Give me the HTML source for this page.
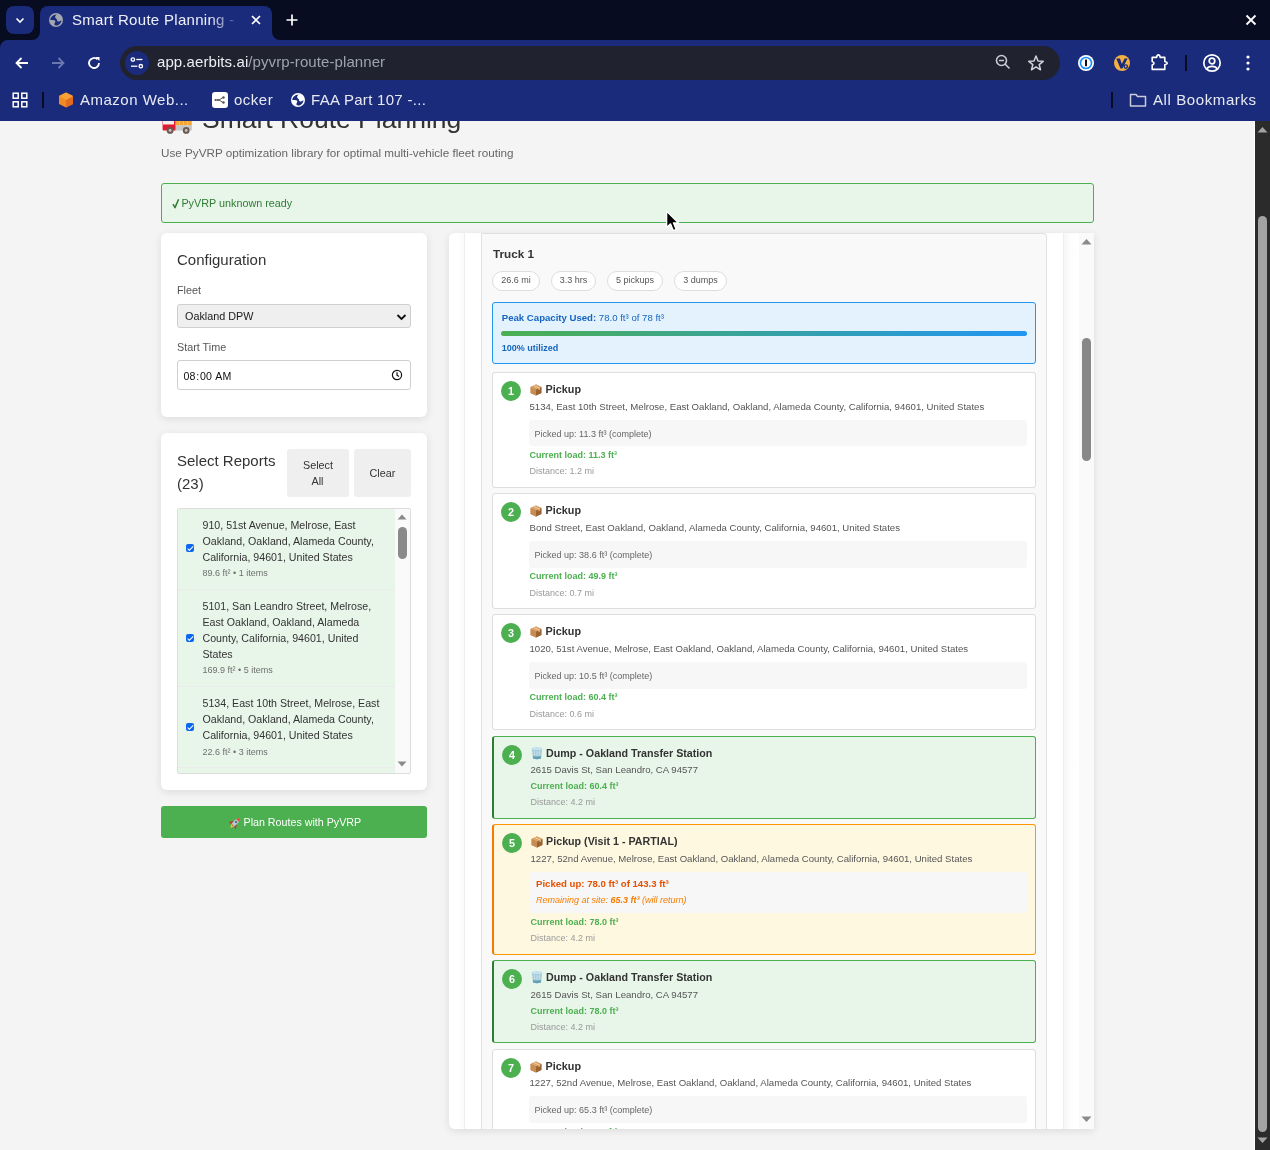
<!DOCTYPE html>
<html><head><meta charset="utf-8">
<style>
*{box-sizing:border-box;margin:0;padding:0}
html,body{width:1270px;height:1150px;overflow:hidden;background:#f4f4f4;font-family:"Liberation Sans",sans-serif}
#root{position:absolute;left:0;top:0;width:1270px;height:1150px;overflow:hidden;will-change:transform}
.abs{position:absolute}
#tabstrip{position:absolute;left:0;top:0;width:1270px;height:40px;background:#080c20}
#toolbar{position:absolute;left:0;top:40px;width:1270px;height:81px;background:#1b2b7c}
.ui{font-family:"Liberation Sans",sans-serif;color:#e8eaf2}
.card{background:#fff;border-radius:6px;box-shadow:0 2px 8px rgba(0,0,0,0.1)}
.btn{background:#efefef;border-radius:3px}
.chk{width:8.2px;height:8.2px;border-radius:2px;background:#0b66f0}
.chk::after{content:"";position:absolute;left:2.6px;top:0.7px;width:2.4px;height:4.6px;border:solid #fff;border-width:0 1.4px 1.4px 0;transform:rotate(45deg)}
</style></head><body><div id="root">
<!-- CHROME -->
<div id="tabstrip"></div>
<div id="toolbar"></div>
<svg class="abs" style="left:0;top:40px" width="8" height="8"><path d="M0 0 H8 A8 8 0 0 0 0 8 Z" fill="#080c20"/></svg>
<!-- tab dropdown -->
<div class="abs" style="left:6px;top:6px;width:28px;height:28px;border-radius:8px;background:#1b2b7c"></div>
<svg class="abs" style="left:14px;top:14px" width="12" height="12" viewBox="0 0 12 12"><path d="M2.5 4.5 L6 8 L9.5 4.5" fill="none" stroke="#fff" stroke-width="1.6"/></svg>
<!-- active tab -->
<div class="abs" style="left:40px;top:6px;width:232px;height:40px;border-radius:8px 8px 0 0;background:#1b2b7c"></div>
<svg class="abs" style="left:32px;top:32px" width="8" height="8"><path d="M0 8 A8 8 0 0 0 8 0 L8 8 Z" fill="#1b2b7c"/></svg>
<svg class="abs" style="left:272px;top:32px" width="8" height="8"><path d="M0 0 A8 8 0 0 0 8 8 L0 8 Z" fill="#1b2b7c"/></svg>
<svg class="abs" style="left:49px;top:13px" width="14" height="14" viewBox="0 0 14 14"><circle cx="7" cy="7" r="7" fill="#a4a7b0"/><path d="M1.3 6.9 C1.6 4 4 1.6 7.7 1.5 C6 2.6 5.6 4.4 6.9 5.5 C7.9 6.3 8.5 7.1 8.1 8 C9 8.8 10.4 8.4 12.5 7.2 C12.3 10.2 9.8 12.5 7 12.6 C5.6 12.5 5.1 11.3 5.5 10.5 C6.2 9.4 6.8 8.3 5.9 7.6 C4.9 6.9 3 7.3 1.3 6.9 Z" fill="#1b2b7c"/></svg>
<div class="abs ui" style="left:72px;top:11px;font-size:15px;letter-spacing:0.3px;white-space:nowrap;width:168px;overflow:hidden;color:#eef0f8;-webkit-mask-image:linear-gradient(90deg,#000 82%,transparent)">Smart Route Planning - </div>
<svg class="abs" style="left:250px;top:14px" width="12" height="12" viewBox="0 0 12 12"><path d="M2 2 L10 10 M10 2 L2 10" stroke="#fff" stroke-width="1.6"/></svg>
<svg class="abs" style="left:285px;top:13px" width="14" height="14" viewBox="0 0 14 14"><path d="M7 1.5 V12.5 M1.5 7 H12.5" stroke="#fff" stroke-width="1.7"/></svg>
<svg class="abs" style="left:1244px;top:13px" width="14" height="14" viewBox="0 0 14 14"><path d="M2.5 2.5 L11.5 11.5 M11.5 2.5 L2.5 11.5" stroke="#fff" stroke-width="1.8"/></svg>
<!-- nav buttons -->
<svg class="abs" style="left:13px;top:54px" width="18" height="18" viewBox="0 0 18 18"><path d="M15 9 H3.5 M8.5 4 L3.5 9 L8.5 14" fill="none" stroke="#fff" stroke-width="1.8"/></svg>
<svg class="abs" style="left:49px;top:54px" width="18" height="18" viewBox="0 0 18 18"><path d="M3 9 H14.5 M9.5 4 L14.5 9 L9.5 14" fill="none" stroke="#6c77b0" stroke-width="1.8"/></svg>
<svg class="abs" style="left:85px;top:54px" width="18" height="18" viewBox="0 0 18 18"><path d="M14 9 A5 5 0 1 1 12.5 5.4" fill="none" stroke="#fff" stroke-width="1.8"/><path d="M10.5 3 H14.5 V7 Z" fill="#fff"/></svg>
<!-- url bar -->
<div class="abs" style="left:120px;top:46px;width:940px;height:34px;border-radius:17px;background:#20232f"></div>
<div class="abs" style="left:125px;top:51px;width:24px;height:24px;border-radius:12px;background:#1b2b7c"></div>
<svg class="abs" style="left:129px;top:55px" width="16" height="16" viewBox="0 0 16 16"><circle cx="3.9" cy="4.5" r="1.7" fill="none" stroke="#fff" stroke-width="1.3"/><path d="M7.3 4.5 H13.4" stroke="#fff" stroke-width="1.3"/><circle cx="11.8" cy="11.2" r="1.7" fill="none" stroke="#fff" stroke-width="1.3"/><path d="M2 11.2 H8.4" stroke="#fff" stroke-width="1.3"/></svg>
<div class="abs ui" style="left:157px;top:53px;font-size:15px;white-space:nowrap;color:#eceef4;letter-spacing:0.09px">app.aerbits.ai<span style="color:#9ea3b2">/pyvrp-route-planner</span></div>
<svg class="abs" style="left:994px;top:53px" width="18" height="18" viewBox="0 0 18 18"><circle cx="7.5" cy="7.5" r="5" fill="none" stroke="#c8cad4" stroke-width="1.6"/><path d="M5 7.5 H10 M11 11 L15.5 15.5" stroke="#c8cad4" stroke-width="1.6"/></svg>
<svg class="abs" style="left:1027px;top:54px" width="18" height="18" viewBox="0 0 18 18"><path d="M9 2 L11 7 L16.2 7.3 L12.2 10.6 L13.5 15.8 L9 12.9 L4.5 15.8 L5.8 10.6 L1.8 7.3 L7 7 Z" fill="none" stroke="#d0d2dc" stroke-width="1.5" stroke-linejoin="round"/></svg>
<!-- extension icons -->
<svg class="abs" style="left:1077px;top:54px" width="18" height="18" viewBox="0 0 18 18"><circle cx="9" cy="9" r="8" fill="#fff"/><circle cx="9" cy="9" r="6.3" fill="#1a8cff"/><circle cx="9" cy="9" r="4.7" fill="#fff"/><rect x="8" y="5.6" width="2" height="6.6" fill="#111"/></svg>
<svg class="abs" style="left:1113px;top:54px" width="18" height="18" viewBox="0 0 18 18"><circle cx="9" cy="9" r="8" fill="#f5b041"/><path d="M3.3 4.6 H7 L8.8 10 L11.6 4.6 H14.6 L9.4 14.4 H7.4 Z" fill="#1b2b7c"/><circle cx="12.8" cy="12.6" r="2.3" fill="#1b2b7c"/><circle cx="12.8" cy="12.6" r="1" fill="#f5b041"/></svg>
<svg class="abs" style="left:1149px;top:53px" width="20" height="20" viewBox="0 0 20 20"><path d="M3.2 4.4 H7.6 Q8 1.9 9.4 1.9 Q10.8 1.9 11.2 4.4 H15.8 V8.6 Q18.3 9.4 18.3 10.2 Q18.3 11 15.8 11.8 V16.4 H3.2 V12 Q5 11.4 5 10.2 Q5 9 3.2 8.4 Z" fill="none" stroke="#fff" stroke-width="1.6" stroke-linejoin="round"/></svg>
<div class="abs" style="left:1185px;top:55px;width:2px;height:16px;background:#080c20"></div>
<svg class="abs" style="left:1202px;top:53px" width="20" height="20" viewBox="0 0 20 20"><circle cx="10" cy="10" r="8.2" fill="none" stroke="#fff" stroke-width="1.7"/><circle cx="10" cy="8" r="2.8" fill="none" stroke="#fff" stroke-width="1.7"/><path d="M4.8 15.8 C6.5 12.5 13.5 12.5 15.2 15.8" fill="none" stroke="#fff" stroke-width="1.7"/></svg>
<svg class="abs" style="left:1240px;top:53px" width="16" height="20" viewBox="0 0 16 20"><circle cx="8" cy="4" r="1.6" fill="#fff"/><circle cx="8" cy="10" r="1.6" fill="#fff"/><circle cx="8" cy="16" r="1.6" fill="#fff"/></svg>
<!-- bookmarks -->
<svg class="abs" style="left:12px;top:92px" width="16" height="16" viewBox="0 0 16 16"><rect x="1.2" y="1.2" width="5" height="5" fill="none" stroke="#fff" stroke-width="1.5"/><rect x="9.8" y="1.2" width="5" height="5" fill="none" stroke="#fff" stroke-width="1.5"/><rect x="1.2" y="9.8" width="5" height="5" fill="none" stroke="#fff" stroke-width="1.5"/><rect x="9.8" y="9.8" width="5" height="5" fill="none" stroke="#fff" stroke-width="1.5"/></svg>
<div class="abs" style="left:42px;top:92px;width:2px;height:16px;background:#080c20"></div>
<svg class="abs" style="left:58px;top:92px" width="16" height="16" viewBox="0 0 16 16"><path d="M8 0.5 L15 4 V12 L8 15.5 L1 12 V4 Z" fill="#f08a24"/><path d="M8 8 L15 4 V12 L8 15.5 Z" fill="#e36b1e"/><path d="M1 4 L8 0.5 L15 4 L8 8 Z" fill="#f7a036"/></svg>
<div class="abs ui" style="left:80px;top:91px;font-size:15px;white-space:nowrap;letter-spacing:0.5px">Amazon Web...</div>
<div class="abs" style="left:212px;top:92px;width:16px;height:16px;border-radius:3px;background:#fff"></div>
<svg class="abs" style="left:214px;top:96px" width="12" height="8" viewBox="0 0 12 8"><path d="M1 4 H5 L9 1.5 M5 4 L9 6.5" stroke="#555" stroke-width="1" fill="none"/><circle cx="1.5" cy="4" r="1" fill="#555"/><circle cx="4" cy="4" r="1" fill="#555"/><circle cx="9.5" cy="1.5" r="1.2" fill="#555"/><circle cx="9.5" cy="6.5" r="1.2" fill="#555"/></svg>
<div class="abs ui" style="left:234px;top:91px;font-size:15px;white-space:nowrap;letter-spacing:0.5px">ocker</div>
<svg class="abs" style="left:291px;top:93px" width="14" height="14" viewBox="0 0 14 14"><circle cx="7" cy="7" r="7" fill="#ffffff"/><path d="M1.3 6.9 C1.6 4 4 1.6 7.7 1.5 C6 2.6 5.6 4.4 6.9 5.5 C7.9 6.3 8.5 7.1 8.1 8 C9 8.8 10.4 8.4 12.5 7.2 C12.3 10.2 9.8 12.5 7 12.6 C5.6 12.5 5.1 11.3 5.5 10.5 C6.2 9.4 6.8 8.3 5.9 7.6 C4.9 6.9 3 7.3 1.3 6.9 Z" fill="#1b2b7c"/></svg>
<div class="abs ui" style="left:311px;top:91px;font-size:15px;white-space:nowrap;letter-spacing:0.3px">FAA Part 107 -...</div>
<div class="abs" style="left:1111px;top:92px;width:2px;height:16px;background:#080c20"></div>
<svg class="abs" style="left:1129px;top:92px" width="18" height="16" viewBox="0 0 18 16"><path d="M1.5 2.5 H7 L8.5 4.5 H16.5 V14 H1.5 Z" fill="none" stroke="#c9ccd8" stroke-width="1.5" stroke-linejoin="round"/></svg>
<div class="abs ui" style="left:1153px;top:91px;font-size:15px;white-space:nowrap;letter-spacing:0.6px">All Bookmarks</div>

<div class="abs" style="left:0;top:121px;width:1255px;height:1029px;overflow:hidden;background:#f4f4f4">
<div class="abs" style="left:0;top:-121px;width:1270px;height:1150px">
<svg class="abs" style="left:160px;top:105px" width="34" height="30" viewBox="0 0 34 30"><rect x="15.6" y="0" width="16.2" height="20.5" fill="#f3a634"/><path d="M19.5 8 V20 M23.5 8 V20 M27.5 8 V20" stroke="#f7c060" stroke-width="1"/><rect x="15.3" y="20.3" width="16.5" height="5.2" fill="#c6c6c6"/><path d="M2.6 16 H15.5 V25.4 H3.6 Q2.6 25.4 2.6 24.4 Z" fill="#e01b30"/><path d="M3 12 H14 V19.5 H3 Z" fill="#f3eee8"/><circle cx="10.1" cy="25.4" r="3.4" fill="#6b5a52"/><circle cx="10.1" cy="25.4" r="1.4" fill="#cdc8c4"/><circle cx="26.2" cy="25.4" r="3.4" fill="#6b5a52"/><circle cx="26.2" cy="25.4" r="1.4" fill="#cdc8c4"/></svg>
<div class="abs" style="left:202px;top:102.50px;font-size:26.5px;line-height:33px;color:#333;white-space:nowrap;">Smart Route Planning</div>
<div class="abs" style="left:161px;top:145.00px;font-size:11.7px;line-height:15px;color:#666;white-space:nowrap;">Use PyVRP optimization library for optimal multi-vehicle fleet routing</div>
<div class="abs" style="left:161px;top:183px;width:933px;height:40px;background:#e8f5e9;border:1px solid #4caf50;border-radius:3px"></div>
<svg class="abs" style="left:172px;top:198px" width="8" height="11" viewBox="0 0 8 11"><path d="M1 6.2 L3 9.6 L6.6 1.2" fill="none" stroke="#2e7d32" stroke-width="1.5" stroke-linejoin="round"/></svg>
<div class="abs" style="left:181.4px;top:196.00px;font-size:10.8px;line-height:14px;color:#2e7d32;white-space:nowrap;">PyVRP unknown ready</div>
<div class="abs card" style="left:161px;top:233px;width:266px;height:184px;"></div>
<div class="abs" style="left:177px;top:250.00px;font-size:15px;line-height:19px;color:#333;white-space:nowrap;">Configuration</div>
<div class="abs" style="left:177px;top:283.00px;font-size:10.8px;line-height:14px;color:#555;white-space:nowrap;">Fleet</div>
<div class="abs" style="left:177px;top:304px;width:234px;height:24px;background:#efefef;border:1px solid #cfcfcf;border-radius:3px"></div>
<div class="abs" style="left:185px;top:309.00px;font-size:10.8px;line-height:14px;color:#1a1a1a;white-space:nowrap;">Oakland DPW</div>
<svg class="abs" style="left:396px;top:312px" width="11" height="10" viewBox="0 0 11 10"><path d="M1.5 3 L5.5 7 L9.5 3" fill="none" stroke="#111" stroke-width="1.8"/></svg>
<div class="abs" style="left:177px;top:340.00px;font-size:10.8px;line-height:14px;color:#555;white-space:nowrap;">Start Time</div>
<div class="abs" style="left:177px;top:360px;width:234px;height:30px;background:#fff;border:1px solid #cfcfcf;border-radius:3px"></div>
<div class="abs" style="left:183.5px;top:369.50px;font-size:10.6px;line-height:13px;color:#111;white-space:nowrap;">08<span style="margin:0 0.9px">:</span>00 <span style="margin-left:0.6px">AM</span></div>
<svg class="abs" style="left:391px;top:369px" width="12" height="12" viewBox="0 0 12 12"><circle cx="6" cy="6" r="4.6" fill="none" stroke="#111" stroke-width="1.2"/><path d="M6 3.2 V6.2 L8 7.6" fill="none" stroke="#111" stroke-width="1.2"/></svg>
<div class="abs card" style="left:161px;top:433px;width:266px;height:357px;"></div>
<div class="abs" style="left:177px;top:451.00px;font-size:15px;line-height:19px;color:#333;white-space:nowrap;">Select Reports</div>
<div class="abs" style="left:177px;top:474.00px;font-size:15px;line-height:19px;color:#333;white-space:nowrap;">(23)</div>
<div class="abs btn" style="left:287px;top:449px;width:62px;height:48px;"></div>
<div class="abs btn" style="left:354px;top:449px;width:57px;height:48px;"></div>
<div class="abs" style="left:303px;top:458.00px;font-size:10.8px;line-height:14px;color:#333;white-space:nowrap;">Select</div>
<div class="abs" style="left:311.5px;top:474.00px;font-size:10.8px;line-height:14px;color:#333;white-space:nowrap;">All</div>
<div class="abs" style="left:369.5px;top:466.00px;font-size:10.8px;line-height:14px;color:#333;white-space:nowrap;">Clear</div>
<div class="abs" style="left:177px;top:508px;width:234px;height:266px;background:#fafafa;border:1px solid #ddd;border-radius:2px"></div>
<div class="abs" style="left:178px;top:509px;width:217px;height:264px;background:#e8f5e9"></div>
<div class="abs" style="left:178px;top:589px;width:217px;height:1px;background:#ebebeb"></div>
<div class="abs" style="left:178px;top:686px;width:217px;height:1px;background:#ebebeb"></div>
<div class="abs" style="left:178px;top:767px;width:217px;height:1px;background:#ebebeb"></div>
<div class="abs chk" style="left:186.1px;top:544px"></div>
<div class="abs" style="left:202.5px;top:518.50px;font-size:10.65px;line-height:13px;color:#333;white-space:nowrap;">910, 51st Avenue, Melrose, East</div>
<div class="abs" style="left:202.5px;top:534.50px;font-size:10.65px;line-height:13px;color:#333;white-space:nowrap;">Oakland, Oakland, Alameda County,</div>
<div class="abs" style="left:202.5px;top:550.50px;font-size:10.65px;line-height:13px;color:#333;white-space:nowrap;">California, 94601, United States</div>
<div class="abs" style="left:202.5px;top:567.50px;font-size:9px;line-height:11px;color:#6f6f6f;white-space:nowrap;">89.6 ft&#178; &#8226; 1 items</div>
<div class="abs chk" style="left:186.1px;top:634px"></div>
<div class="abs" style="left:202.5px;top:599.50px;font-size:10.65px;line-height:13px;color:#333;white-space:nowrap;">5101, San Leandro Street, Melrose,</div>
<div class="abs" style="left:202.5px;top:615.50px;font-size:10.65px;line-height:13px;color:#333;white-space:nowrap;">East Oakland, Oakland, Alameda</div>
<div class="abs" style="left:202.5px;top:631.50px;font-size:10.65px;line-height:13px;color:#333;white-space:nowrap;">County, California, 94601, United</div>
<div class="abs" style="left:202.5px;top:647.50px;font-size:10.65px;line-height:13px;color:#333;white-space:nowrap;">States</div>
<div class="abs" style="left:202.5px;top:664.50px;font-size:9px;line-height:11px;color:#6f6f6f;white-space:nowrap;">169.9 ft&#178; &#8226; 5 items</div>
<div class="abs chk" style="left:186.1px;top:723px"></div>
<div class="abs" style="left:202.5px;top:696.50px;font-size:10.65px;line-height:13px;color:#333;white-space:nowrap;">5134, East 10th Street, Melrose, East</div>
<div class="abs" style="left:202.5px;top:712.50px;font-size:10.65px;line-height:13px;color:#333;white-space:nowrap;">Oakland, Oakland, Alameda County,</div>
<div class="abs" style="left:202.5px;top:728.50px;font-size:10.65px;line-height:13px;color:#333;white-space:nowrap;">California, 94601, United States</div>
<div class="abs" style="left:202.5px;top:746.50px;font-size:9px;line-height:11px;color:#6f6f6f;white-space:nowrap;">22.6 ft&#178; &#8226; 3 items</div>
<svg class="abs" style="left:397px;top:514px" width="10" height="6" viewBox="0 0 10 6"><path d="M0.5 5.5 L5 0.5 L9.5 5.5 Z" fill="#8a8a8a"/></svg>
<div class="abs" style="left:398px;top:527px;width:9px;height:32px;border-radius:5px;background:#8a8a8a"></div>
<svg class="abs" style="left:397px;top:761px" width="10" height="6" viewBox="0 0 10 6"><path d="M0.5 0.5 L5 5.5 L9.5 0.5 Z" fill="#8a8a8a"/></svg>
<div class="abs" style="left:161px;top:806px;width:266px;height:32px;background:#4caf50;border-radius:3px"></div>
<svg class="abs" style="left:227.5px;top:815.5px" width="14" height="14" viewBox="0 0 12 12"><g transform="rotate(45 6 6)"><path d="M6 0.2 C7.5 1.4 7.8 3 7.8 4.5 V8.4 H4.2 V4.5 C4.2 3 4.5 1.4 6 0.2 Z" fill="#b4cadb"/><path d="M6 0.2 C7.2 1.1 7.6 2.1 7.7 2.9 H4.3 C4.4 2.1 4.8 1.1 6 0.2 Z" fill="#e9442b"/><circle cx="6" cy="4.7" r="0.95" fill="#56626e"/><path d="M4.2 5.8 L2.3 8.3 V9.6 L4.2 8.6 Z" fill="#d22b2b"/><path d="M7.8 5.8 L9.7 8.3 V9.6 L7.8 8.6 Z" fill="#d22b2b"/><path d="M4.6 8.4 H7.4 L6 11.8 Z" fill="#f5d447"/><path d="M5.3 8.4 H6.7 L6 10.2 Z" fill="#e8552b"/></g></svg>
<div class="abs" style="left:243.5px;top:815.50px;font-size:10.7px;line-height:13px;color:#fff;white-space:nowrap;">Plan Routes with PyVRP</div>
<div class="abs card" style="left:449px;top:233px;width:645px;height:896px;border-radius:6px 0 0 6px"></div>
<div class="abs" style="left:449px;top:233px;width:645px;height:896px;overflow:hidden;border-radius:6px 0 0 6px">
<div class="abs" style="left:-449px;top:-233px;width:1270px;height:1150px">
<div class="abs" style="left:449px;top:233px;width:15px;height:896px;background:linear-gradient(90deg,#fff 0%,#fff 60%,#fafafa 100%)"></div>
<div class="abs" style="left:464px;top:233px;width:1px;height:896px;background:#eeeeee"></div>
<div class="abs" style="left:1063px;top:233px;width:1px;height:896px;background:#eeeeee"></div>
<div class="abs" style="left:1064px;top:233px;width:15px;height:896px;background:linear-gradient(90deg,#f6f6f6 0%,#fdfdfd 45%,#fff 100%)"></div>
<div class="abs" style="left:1079px;top:233px;width:15px;height:896px;background:#fafafa"></div>
<div class="abs" style="left:481px;top:233px;width:566px;height:1000px;background:#f9f9f9;border:1px solid #e0e0e0;border-radius:0 3px 3px 3px"></div>
<div class="abs" style="left:493px;top:246.00px;font-size:11.7px;line-height:15px;color:#333;white-space:nowrap;font-weight:bold;">Truck 1</div>
<div class="abs" style="left:492px;top:271px;width:48px;height:20px;background:#fff;border:1px solid #ddd;border-radius:10px"></div>
<div class="abs" style="left:492px;top:274.78px;width:48px;text-align:center;font-size:9px;line-height:11px;color:#555">26.6 mi</div>
<div class="abs" style="left:551px;top:271px;width:45px;height:20px;background:#fff;border:1px solid #ddd;border-radius:10px"></div>
<div class="abs" style="left:551px;top:274.78px;width:45px;text-align:center;font-size:9px;line-height:11px;color:#555">3.3 hrs</div>
<div class="abs" style="left:607px;top:271px;width:56px;height:20px;background:#fff;border:1px solid #ddd;border-radius:10px"></div>
<div class="abs" style="left:607px;top:274.78px;width:56px;text-align:center;font-size:9px;line-height:11px;color:#555">5 pickups</div>
<div class="abs" style="left:674px;top:271px;width:53px;height:20px;background:#fff;border:1px solid #ddd;border-radius:10px"></div>
<div class="abs" style="left:674px;top:274.78px;width:53px;text-align:center;font-size:9px;line-height:11px;color:#555">3 dumps</div>
<div class="abs" style="left:492px;top:302px;width:544px;height:62px;background:#e3f2fd;border:1px solid #2196f3;border-radius:3px"></div>
<div class="abs" style="left:501.8px;top:311.50px;font-size:9.6px;line-height:12px;color:#1565c0;white-space:nowrap;"><b>Peak Capacity Used:</b> 78.0 ft&#179; of 78 ft&#179;</div>
<div class="abs" style="left:501px;top:331px;width:526px;height:5px;border-radius:3px;background:linear-gradient(90deg,#4caf50,#2196f3)"></div>
<div class="abs" style="left:501.8px;top:342.50px;font-size:9px;line-height:11px;color:#1565c0;white-space:nowrap;font-weight:bold;">100% utilized</div>
<div class="abs" style="left:492px;top:372px;width:544px;height:116px;background:#fff;border:1px solid #ddd;border-radius:3px"></div>
<div class="abs" style="left:501px;top:380.5px;width:20px;height:20px;border-radius:10px;background:#4caf50;color:#fff;font-weight:bold;font-size:10.8px;line-height:20px;text-align:center">1</div>
<svg class="abs" style="left:530px;top:383.5px" width="12" height="12" viewBox="0 0 12 12"><path d="M6 0.6 L11.4 3 V9 L6 11.4 L0.6 9 V3 Z" fill="#b07a45"/><path d="M0.6 3 L6 5.4 V11.4 L0.6 9 Z" fill="#c98d52"/><path d="M6 5.4 L11.4 3 V9 L6 11.4 Z" fill="#9a6432"/><path d="M0.6 3 L6 0.6 L11.4 3 L6 5.4 Z" fill="#dba46a"/><path d="M3.2 1.8 L8.6 4.2 V6.2 L9.8 5.6 V3.7 L4.4 1.3 Z" fill="#eccb9a"/></svg>
<div class="abs" style="left:545.6px;top:382.00px;font-size:10.8px;line-height:14px;color:#333;white-space:nowrap;font-weight:bold;">Pickup</div>
<div class="abs" style="left:529.5px;top:400.50px;font-size:9.6px;line-height:12px;color:#555;white-space:nowrap;">5134, East 10th Street, Melrose, East Oakland, Oakland, Alameda County, California, 94601, United States</div>
<div class="abs" style="left:529px;top:420px;width:498px;height:26px;background:#f7f7f7;border-radius:3px"></div>
<div class="abs" style="left:534.6px;top:428.50px;font-size:9px;line-height:11px;color:#666;white-space:nowrap;">Picked up: 11.3 ft&#179; (complete)</div>
<div class="abs" style="left:529.5px;top:449.50px;font-size:9px;line-height:11px;color:#4caf50;white-space:nowrap;font-weight:bold;">Current load: 11.3 ft&#179;</div>
<div class="abs" style="left:529.5px;top:465.50px;font-size:9px;line-height:11px;color:#999;white-space:nowrap;">Distance: 1.2 mi</div>
<div class="abs" style="left:492px;top:493px;width:544px;height:116px;background:#fff;border:1px solid #ddd;border-radius:3px"></div>
<div class="abs" style="left:501px;top:501.5px;width:20px;height:20px;border-radius:10px;background:#4caf50;color:#fff;font-weight:bold;font-size:10.8px;line-height:20px;text-align:center">2</div>
<svg class="abs" style="left:530px;top:504.5px" width="12" height="12" viewBox="0 0 12 12"><path d="M6 0.6 L11.4 3 V9 L6 11.4 L0.6 9 V3 Z" fill="#b07a45"/><path d="M0.6 3 L6 5.4 V11.4 L0.6 9 Z" fill="#c98d52"/><path d="M6 5.4 L11.4 3 V9 L6 11.4 Z" fill="#9a6432"/><path d="M0.6 3 L6 0.6 L11.4 3 L6 5.4 Z" fill="#dba46a"/><path d="M3.2 1.8 L8.6 4.2 V6.2 L9.8 5.6 V3.7 L4.4 1.3 Z" fill="#eccb9a"/></svg>
<div class="abs" style="left:545.6px;top:503.00px;font-size:10.8px;line-height:14px;color:#333;white-space:nowrap;font-weight:bold;">Pickup</div>
<div class="abs" style="left:529.5px;top:521.50px;font-size:9.6px;line-height:12px;color:#555;white-space:nowrap;">Bond Street, East Oakland, Oakland, Alameda County, California, 94601, United States</div>
<div class="abs" style="left:529px;top:541px;width:498px;height:27px;background:#f7f7f7;border-radius:3px"></div>
<div class="abs" style="left:534.6px;top:549.50px;font-size:9px;line-height:11px;color:#666;white-space:nowrap;">Picked up: 38.6 ft&#179; (complete)</div>
<div class="abs" style="left:529.5px;top:570.50px;font-size:9px;line-height:11px;color:#4caf50;white-space:nowrap;font-weight:bold;">Current load: 49.9 ft&#179;</div>
<div class="abs" style="left:529.5px;top:587.50px;font-size:9px;line-height:11px;color:#999;white-space:nowrap;">Distance: 0.7 mi</div>
<div class="abs" style="left:492px;top:614px;width:544px;height:116px;background:#fff;border:1px solid #ddd;border-radius:3px"></div>
<div class="abs" style="left:501px;top:622.5px;width:20px;height:20px;border-radius:10px;background:#4caf50;color:#fff;font-weight:bold;font-size:10.8px;line-height:20px;text-align:center">3</div>
<svg class="abs" style="left:530px;top:625.5px" width="12" height="12" viewBox="0 0 12 12"><path d="M6 0.6 L11.4 3 V9 L6 11.4 L0.6 9 V3 Z" fill="#b07a45"/><path d="M0.6 3 L6 5.4 V11.4 L0.6 9 Z" fill="#c98d52"/><path d="M6 5.4 L11.4 3 V9 L6 11.4 Z" fill="#9a6432"/><path d="M0.6 3 L6 0.6 L11.4 3 L6 5.4 Z" fill="#dba46a"/><path d="M3.2 1.8 L8.6 4.2 V6.2 L9.8 5.6 V3.7 L4.4 1.3 Z" fill="#eccb9a"/></svg>
<div class="abs" style="left:545.6px;top:624.00px;font-size:10.8px;line-height:14px;color:#333;white-space:nowrap;font-weight:bold;">Pickup</div>
<div class="abs" style="left:529.5px;top:642.50px;font-size:9.6px;line-height:12px;color:#555;white-space:nowrap;">1020, 51st Avenue, Melrose, East Oakland, Oakland, Alameda County, California, 94601, United States</div>
<div class="abs" style="left:529px;top:662px;width:498px;height:27px;background:#f7f7f7;border-radius:3px"></div>
<div class="abs" style="left:534.6px;top:670.50px;font-size:9px;line-height:11px;color:#666;white-space:nowrap;">Picked up: 10.5 ft&#179; (complete)</div>
<div class="abs" style="left:529.5px;top:691.50px;font-size:9px;line-height:11px;color:#4caf50;white-space:nowrap;font-weight:bold;">Current load: 60.4 ft&#179;</div>
<div class="abs" style="left:529.5px;top:708.50px;font-size:9px;line-height:11px;color:#999;white-space:nowrap;">Distance: 0.6 mi</div>
<div class="abs" style="left:492px;top:736px;width:544px;height:83px;background:#e8f5e9;border:1px solid #4caf50;border-left:2px solid #2e7d32;border-radius:3px"></div>
<div class="abs" style="left:502px;top:744.5px;width:20px;height:20px;border-radius:10px;background:#4caf50;color:#fff;font-weight:bold;font-size:10.8px;line-height:20px;text-align:center">4</div>
<svg class="abs" style="left:531px;top:746.0px" width="12" height="14" viewBox="0 0 12 14"><path d="M0.8 2.6 H11.2 L10 12.6 Q6 14 2 12.6 Z" fill="#a6cbd9"/><path d="M0.6 2 Q6 0.2 11.4 2 L11.2 3.4 Q6 4.6 0.8 3.4 Z" fill="#c3e2ea"/><path d="M1.9 10 Q6 11.2 10.1 10 L9.9 12.6 Q6 14 2.1 12.6 Z" fill="#5f9fb8"/><path d="M3.4 4.6 V9.4 M6 5 V9.8 M8.6 4.6 V9.4" stroke="#d2e8ef" stroke-width="0.8"/></svg>
<div class="abs" style="left:546.1px;top:746.50px;font-size:10.7px;line-height:13px;color:#333;white-space:nowrap;font-weight:bold;">Dump - Oakland Transfer Station</div>
<div class="abs" style="left:530.5px;top:763.50px;font-size:9.6px;line-height:12px;color:#555;white-space:nowrap;">2615 Davis St, San Leandro, CA 94577</div>
<div class="abs" style="left:530.5px;top:780.50px;font-size:9px;line-height:11px;color:#4caf50;white-space:nowrap;font-weight:bold;">Current load: 60.4 ft&#179;</div>
<div class="abs" style="left:530.5px;top:796.50px;font-size:9px;line-height:11px;color:#999;white-space:nowrap;">Distance: 4.2 mi</div>
<div class="abs" style="left:492px;top:824px;width:544px;height:131px;background:#fff8e1;border:1px solid #ff9800;border-left:2px solid #f57c00;border-radius:3px"></div>
<div class="abs" style="left:502px;top:832.5px;width:20px;height:20px;border-radius:10px;background:#4caf50;color:#fff;font-weight:bold;font-size:10.8px;line-height:20px;text-align:center">5</div>
<svg class="abs" style="left:531px;top:835.5px" width="12" height="12" viewBox="0 0 12 12"><path d="M6 0.6 L11.4 3 V9 L6 11.4 L0.6 9 V3 Z" fill="#b07a45"/><path d="M0.6 3 L6 5.4 V11.4 L0.6 9 Z" fill="#c98d52"/><path d="M6 5.4 L11.4 3 V9 L6 11.4 Z" fill="#9a6432"/><path d="M0.6 3 L6 0.6 L11.4 3 L6 5.4 Z" fill="#dba46a"/><path d="M3.2 1.8 L8.6 4.2 V6.2 L9.8 5.6 V3.7 L4.4 1.3 Z" fill="#eccb9a"/></svg>
<div class="abs" style="left:546.1px;top:834.50px;font-size:10.7px;line-height:13px;color:#333;white-space:nowrap;font-weight:bold;">Pickup (Visit 1 - PARTIAL)</div>
<div class="abs" style="left:530.5px;top:852.50px;font-size:9.6px;line-height:12px;color:#555;white-space:nowrap;">1227, 52nd Avenue, Melrose, East Oakland, Oakland, Alameda County, California, 94601, United States</div>
<div class="abs" style="left:530px;top:872px;width:497px;height:41px;background:#f7f7f7;border-radius:3px"></div>
<div class="abs" style="left:536px;top:877.50px;font-size:9.6px;line-height:12px;color:#e65100;white-space:nowrap;font-weight:bold;">Picked up: 78.0 ft&#179; of 143.3 ft&#179;</div>
<div class="abs" style="left:536px;top:894.50px;font-size:9px;line-height:11px;color:#f57c00;white-space:nowrap;font-style:italic;">Remaining at site: <b>65.3 ft&#179;</b> (will return)</div>
<div class="abs" style="left:530.5px;top:916.50px;font-size:9px;line-height:11px;color:#4caf50;white-space:nowrap;font-weight:bold;">Current load: 78.0 ft&#179;</div>
<div class="abs" style="left:530.5px;top:932.50px;font-size:9px;line-height:11px;color:#999;white-space:nowrap;">Distance: 4.2 mi</div>
<div class="abs" style="left:492px;top:960px;width:544px;height:83px;background:#e8f5e9;border:1px solid #4caf50;border-left:2px solid #2e7d32;border-radius:3px"></div>
<div class="abs" style="left:502px;top:968.5px;width:20px;height:20px;border-radius:10px;background:#4caf50;color:#fff;font-weight:bold;font-size:10.8px;line-height:20px;text-align:center">6</div>
<svg class="abs" style="left:531px;top:970.0px" width="12" height="14" viewBox="0 0 12 14"><path d="M0.8 2.6 H11.2 L10 12.6 Q6 14 2 12.6 Z" fill="#a6cbd9"/><path d="M0.6 2 Q6 0.2 11.4 2 L11.2 3.4 Q6 4.6 0.8 3.4 Z" fill="#c3e2ea"/><path d="M1.9 10 Q6 11.2 10.1 10 L9.9 12.6 Q6 14 2.1 12.6 Z" fill="#5f9fb8"/><path d="M3.4 4.6 V9.4 M6 5 V9.8 M8.6 4.6 V9.4" stroke="#d2e8ef" stroke-width="0.8"/></svg>
<div class="abs" style="left:546.1px;top:970.50px;font-size:10.7px;line-height:13px;color:#333;white-space:nowrap;font-weight:bold;">Dump - Oakland Transfer Station</div>
<div class="abs" style="left:530.5px;top:988.50px;font-size:9.6px;line-height:12px;color:#555;white-space:nowrap;">2615 Davis St, San Leandro, CA 94577</div>
<div class="abs" style="left:530.5px;top:1005.50px;font-size:9px;line-height:11px;color:#4caf50;white-space:nowrap;font-weight:bold;">Current load: 78.0 ft&#179;</div>
<div class="abs" style="left:530.5px;top:1021.50px;font-size:9px;line-height:11px;color:#999;white-space:nowrap;">Distance: 4.2 mi</div>
<div class="abs" style="left:492px;top:1049px;width:544px;height:116px;background:#fff;border:1px solid #ddd;border-radius:3px"></div>
<div class="abs" style="left:501px;top:1057.5px;width:20px;height:20px;border-radius:10px;background:#4caf50;color:#fff;font-weight:bold;font-size:10.8px;line-height:20px;text-align:center">7</div>
<svg class="abs" style="left:530px;top:1060.5px" width="12" height="12" viewBox="0 0 12 12"><path d="M6 0.6 L11.4 3 V9 L6 11.4 L0.6 9 V3 Z" fill="#b07a45"/><path d="M0.6 3 L6 5.4 V11.4 L0.6 9 Z" fill="#c98d52"/><path d="M6 5.4 L11.4 3 V9 L6 11.4 Z" fill="#9a6432"/><path d="M0.6 3 L6 0.6 L11.4 3 L6 5.4 Z" fill="#dba46a"/><path d="M3.2 1.8 L8.6 4.2 V6.2 L9.8 5.6 V3.7 L4.4 1.3 Z" fill="#eccb9a"/></svg>
<div class="abs" style="left:545.6px;top:1059.00px;font-size:10.8px;line-height:14px;color:#333;white-space:nowrap;font-weight:bold;">Pickup</div>
<div class="abs" style="left:529.5px;top:1076.50px;font-size:9.6px;line-height:12px;color:#555;white-space:nowrap;">1227, 52nd Avenue, Melrose, East Oakland, Oakland, Alameda County, California, 94601, United States</div>
<div class="abs" style="left:529px;top:1096px;width:498px;height:27px;background:#f7f7f7;border-radius:3px"></div>
<div class="abs" style="left:534.6px;top:1104.50px;font-size:9px;line-height:11px;color:#666;white-space:nowrap;">Picked up: 65.3 ft&#179; (complete)</div>
<div class="abs" style="left:529.5px;top:1126.50px;font-size:9px;line-height:11px;color:#4caf50;white-space:nowrap;font-weight:bold;">Current load: 65.3 ft&#179;</div>
<div class="abs" style="left:529.5px;top:1142.50px;font-size:9px;line-height:11px;color:#999;white-space:nowrap;">Distance: 4.2 mi</div>
<svg class="abs" style="left:1081px;top:238px" width="11" height="7" viewBox="0 0 11 7"><path d="M0.5 6.5 L5.5 1 L10.5 6.5 Z" fill="#8a8a8a"/></svg>
<div class="abs" style="left:1082px;top:338px;width:9px;height:123px;border-radius:5px;background:#888"></div>
<svg class="abs" style="left:1081px;top:1116px" width="11" height="7" viewBox="0 0 11 7"><path d="M0.5 0.5 L5.5 6 L10.5 0.5 Z" fill="#8a8a8a"/></svg>
</div>
</div>
</div></div>
<div class="abs" style="left:1254px;top:121px;width:1px;height:1029px;background:#ffffff"></div>
<div class="abs" style="left:1255px;top:121px;width:15px;height:1029px;background:#2b2b2b"></div>
<svg class="abs" style="left:1257px;top:126px" width="11" height="7" viewBox="0 0 11 7"><path d="M0.5 6.5 L5.5 1 L10.5 6.5 Z" fill="#a3a3a3"/></svg>
<div class="abs" style="left:1258px;top:216px;width:9px;height:916px;border-radius:5px;background:#a3a3a3"></div>
<svg class="abs" style="left:1257px;top:1137px" width="11" height="7" viewBox="0 0 11 7"><path d="M0.5 0.5 L5.5 6 L10.5 0.5 Z" fill="#a3a3a3"/></svg>
<svg class="abs" style="left:665.2px;top:210.2px" width="15.4" height="24.2" viewBox="0 0 14 22"><path d="M1.5 1.2 V15.8 L5 12.6 L7.6 18.8 L10.2 17.7 L7.7 11.8 H12.3 Z" fill="#000" stroke="#fff" stroke-width="1.2" stroke-linejoin="round"/></svg>
</div></body></html>
